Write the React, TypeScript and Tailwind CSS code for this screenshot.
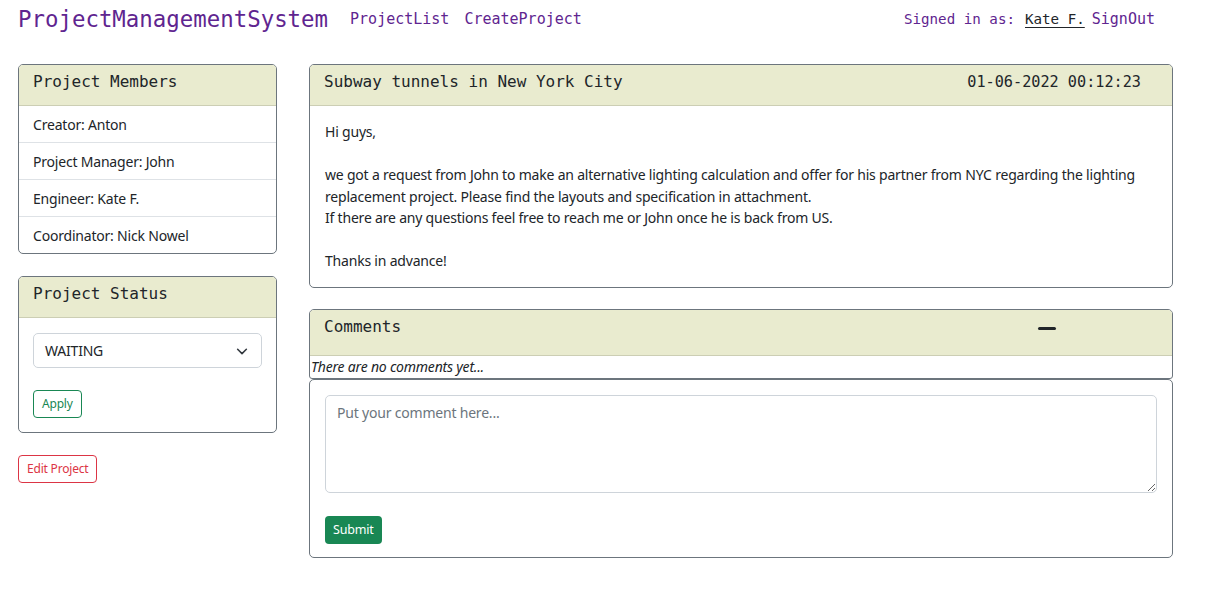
import React from "react";

const mono = { fontFamily: '"DejaVu Sans Mono", "Liberation Mono", monospace' };

function CardHeader({ children, className = "" }: { children: React.ReactNode; className?: string }) {
  return (
    <div
      className={`bg-[#e9ebcf] border-b border-[#ccceb4] px-[14px] text-[16px] leading-[24px] text-[#212529] ${className}`}
      style={mono}
    >
      {children}
    </div>
  );
}

export default function App() {
  return (
    <div
      className="min-h-[599px] bg-white text-[#212529] text-[14px] tracking-[-0.2px]"
      style={{ fontFamily: '"Noto Sans", "Open Sans", sans-serif' }}
    >
      <nav className="flex items-center h-[40px] pl-[18px] tracking-normal" style={mono}>
        <span className="text-[22.4px] text-[#5f2590]">ProjectManagementSystem</span>
        <div className="flex gap-[15px] ml-[22px] text-[15px] text-[#5f2590] mt-[-1px]">
          <span>ProjectList</span>
          <span>CreateProject</span>
        </div>
        <div className="ml-auto mr-[52px] flex items-baseline mt-[-1px]">
          <span className="text-[14.2px] text-[#5f2590]">Signed in as:</span>
          <span className="text-[14.2px] ml-[10px] underline underline-offset-[3px] text-[#212529]">Kate F.</span>
          <span className="text-[15px] ml-[7px] text-[#5f2590]">SignOut</span>
        </div>
      </nav>

      <div className="flex gap-[32px] pl-[18px] mt-[24px]">
        {/* Left column */}
        <div className="w-[259px] flex flex-col">
          <div className="border border-[#6c757d] rounded-[5px] overflow-hidden">
            <CardHeader className="pt-[5px] pb-[11px] tracking-normal">Project Members</CardHeader>
            {["Creator: Anton", "Project Manager: John", "Engineer: Kate F.", "Coordinator: Nick Nowel"].map((t, i, a) => (
              <div
                key={t}
                className={`px-[14px] pt-[9px] pb-[7px] leading-[20px] ${i < a.length - 1 ? "border-b border-[#dee2e6]" : ""}`}
              >
                {t}
              </div>
            ))}
          </div>

          <div className="mt-[22px] border border-[#6c757d] rounded-[5px] overflow-hidden">
            <CardHeader className="pt-[5px] pb-[11px] tracking-normal">Project Status</CardHeader>
            <div className="px-[14px] pt-[15px] pb-[14px]">
              <div className="h-[35px] border border-[#ced4da] rounded-[5px] flex items-center justify-between pl-[11px] pr-[12px]">
                <span className="leading-[21px]">WAITING</span>
                <svg width="14" height="14" viewBox="0 0 16 16" fill="none" stroke="#343a40" strokeWidth="1.8" strokeLinecap="round" strokeLinejoin="round">
                  <path d="M3 6l5 5 5-5" />
                </svg>
              </div>
              <button className="mt-[22px] h-[28px] px-[8px] border border-[#198754] text-[#198754] rounded-[4px] text-[12px] leading-[18px]">
                Apply
              </button>
            </div>
          </div>

          <div className="mt-[22px]">
            <button className="h-[28px] px-[8px] border border-[#dc3545] text-[#dc3545] rounded-[4px] text-[12px] leading-[18px]">
              Edit Project
            </button>
          </div>
        </div>

        {/* Right column */}
        <div className="w-[864px] flex flex-col">
          <div className="border border-[#6c757d] rounded-[5px] overflow-hidden">
            <CardHeader className="pt-[5px] pb-[11px] flex justify-between tracking-normal">
              <span>Subway tunnels in New York City</span>
              <span className="text-[15.2px] mr-[17px]">01-06-2022 00:12:23</span>
            </CardHeader>
            <div className="px-[15px] pt-[15px] pb-[15px] leading-[21.5px] whitespace-nowrap">
              <div>Hi guys,</div>
              <div>&nbsp;</div>
              <div>we got a request from John to make an alternative lighting calculation and offer for his partner from NYC regarding the lighting</div>
              <div>replacement project. Please find the layouts and specification in attachment.</div>
              <div>If there are any questions feel free to reach me or John once he is back from US.</div>
              <div>&nbsp;</div>
              <div>Thanks in advance!</div>
            </div>
          </div>

          <div className="mt-[21px] border border-[#6c757d] rounded-t-[5px] rounded-b-[3px] overflow-hidden">
            <CardHeader className="h-[46px] pt-[5px] flex justify-between items-start tracking-normal">
              <span>Comments</span>
              <span className="mt-[12px] mr-[102px] block w-[18px] h-[3px] rounded-[2px] bg-[#212529]" />
            </CardHeader>
            <div className="italic leading-[22px] pl-[1px]">There are no comments yet...</div>
          </div>

          <div className="border border-[#6c757d] rounded-[5px] px-[15px] pt-[15px] pb-[13px]">
            <textarea
              placeholder="Put your comment here..."
              className="block w-full h-[98px] border border-[#ced4da] rounded-[5px] px-[11px] py-[6px] leading-[21px] placeholder-[#6c757d] outline-none"
            />
            <button className="mt-[23px] h-[28px] px-[8px] bg-[#198754] text-white rounded-[4px] text-[12.5px] leading-[18px]">
              Submit
            </button>
          </div>
        </div>
      </div>
    </div>
  );
}
